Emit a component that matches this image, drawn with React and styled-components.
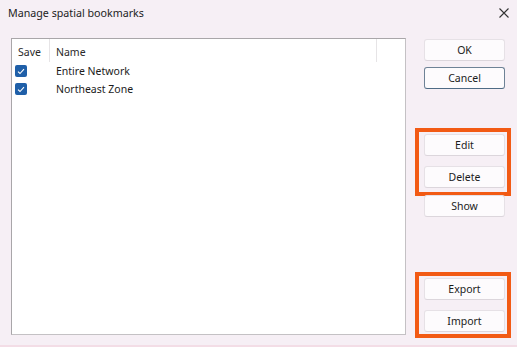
import React from "react";
import styled, { createGlobalStyle } from "styled-components";

const Global = createGlobalStyle`
  html, body { margin: 0; padding: 0; background: #f6eff5; }
  body { font-family: "Noto Sans", "Open Sans", sans-serif; color: #1b1b1b; }
  * { box-sizing: border-box; }
`;

const Dialog = styled.div`
  width: 517px;
  height: 347px;
  background: #f6eff5;
  display: flex;
  flex-direction: column;
  border-bottom: 2px solid #f3dde6;
  overflow: hidden;
`;

const TitleBar = styled.div`
  height: 25px;
  flex-shrink: 0;
  display: flex;
  align-items: center;
  justify-content: space-between;
  padding: 1px 7px 0 8px;
`;

const Title = styled.span`
  font-size: 10.7px;
  color: #1c1c1c;
`;

const Close = styled.button`
  width: 12px;
  height: 12px;
  border: 0;
  padding: 0;
  background: transparent;
  display: flex;
  align-items: center;
  justify-content: center;
`;

const Body = styled.div`
  flex: 1;
  display: flex;
  align-items: flex-start;
  padding: 13px 5px 0 11px;
  gap: 10px;
`;

const ListBox = styled.div`
  width: 395px;
  height: 297px;
  flex-shrink: 0;
  background: #ffffff;
  border: 1px solid #a9a6a9;
  border-right-color: #c4c1c4;
  border-bottom-color: #c4c1c4;
  display: flex;
  flex-direction: column;
`;

const HeaderRow = styled.div`
  display: grid;
  grid-template-columns: 38px 327px 1fr;
  height: 23px;
`;

const HeaderCell = styled.div`
  font-size: 10.5px;
  display: flex;
  align-items: center;
  padding-top: 3px;
  padding-left: ${(p) => p.$pad || 6}px;
  color: #2a2a2a;
  border-right: ${(p) => (p.$sep ? "1px solid #e6e4e6" : "0")};
`;

const Row = styled.div`
  display: grid;
  grid-template-columns: 38px 1fr;
  height: 18px;
  align-items: center;
`;

const CheckCell = styled.div`
  display: flex;
  align-items: center;
  padding-left: 3px;
`;

const Check = styled.span`
  width: 12px;
  height: 12px;
  border-radius: 2px;
  background: #1f5fa8;
  display: inline-flex;
  align-items: center;
  justify-content: center;
`;

const NameCell = styled.div`
  font-size: 10.5px;
  padding-left: 6px;
  color: #1b1b1b;
`;

const Buttons = styled.div`
  display: flex;
  flex-direction: column;
  align-items: flex-start;
  width: 96px;
  padding-left: 8px;
`;

const Btn = styled.button`
  width: 81px;
  height: 22px;
  flex-shrink: 0;
  margin-top: ${(p) => p.$mt || 0}px;
  background: #fdfbfd;
  border: 1px solid ${(p) => (p.$focus ? "#6e8296" : "#e6e1e6")};
  border-bottom-color: ${(p) => (p.$focus ? "#4f6b85" : "#dcd6dc")};
  border-radius: 3px;
  font-family: "Noto Sans", "Open Sans", sans-serif;
  font-size: 10.5px;
  color: #1b1b1b;
  padding: 0;
  display: flex;
  align-items: center;
  justify-content: center;
`;

const Highlight = styled.div`
  width: 96px;
  margin-left: -9px;
  margin-top: ${(p) => p.$mt || 0}px;
  border: 4px solid #f25a14;
  padding: 2px 0 ${(p) => p.$pb ?? 2}px 5px;
  display: flex;
  flex-direction: column;
`;

const items = ["Entire Network", "Northeast Zone"];

function CheckIcon() {
  return (
    <svg width="8" height="7" viewBox="0 0 8 7">
      <path d="M1 3.6 L3 5.5 L7 1.2" fill="none" stroke="#ffffff" strokeWidth="1.1" />
    </svg>
  );
}

export default function App() {
  return (
    <>
      <Global />
      <Dialog>
        <TitleBar>
          <Title>Manage spatial bookmarks</Title>
          <Close aria-label="Close">
            <svg width="10" height="10" viewBox="0 0 10 10">
              <path d="M0.5 0.5 L9.5 9.5 M9.5 0.5 L0.5 9.5" stroke="#333" strokeWidth="1.1" />
            </svg>
          </Close>
        </TitleBar>
        <Body>
          <ListBox>
            <HeaderRow>
              <HeaderCell $pad={6} $sep>Save</HeaderCell>
              <HeaderCell $pad={6} $sep>Name</HeaderCell>
              <HeaderCell />
            </HeaderRow>
            {items.map((t) => (
              <Row key={t}>
                <CheckCell>
                  <Check>
                    <CheckIcon />
                  </Check>
                </CheckCell>
                <NameCell>{t}</NameCell>
              </Row>
            ))}
          </ListBox>
          <Buttons>
            <Btn $mt={1}>OK</Btn>
            <Btn $mt={6} $focus>Cancel</Btn>
            <Highlight $mt={39} $pb={4}>
              <Btn>Edit</Btn>
              <Btn $mt={10}>Delete</Btn>
            </Highlight>
            <Btn $mt={-1}>Show</Btn>
            <Highlight $mt={55} $pb={2}>
              <Btn>Export</Btn>
              <Btn $mt={10}>Import</Btn>
            </Highlight>
          </Buttons>
        </Body>
      </Dialog>
    </>
  );
}
